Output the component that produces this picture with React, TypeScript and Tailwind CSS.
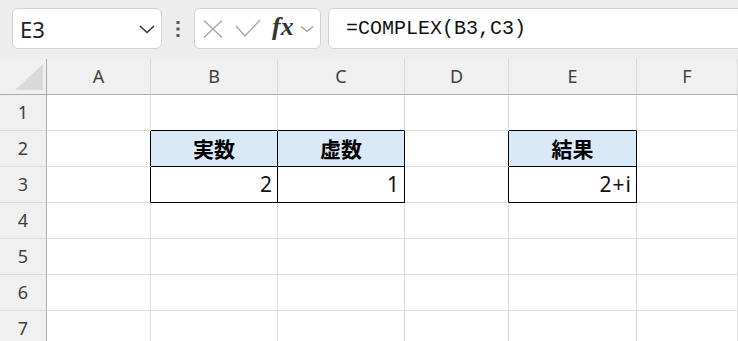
import React from "react";

const COLS = ["A", "B", "C", "D", "E", "F"];
const ROWS = [1, 2, 3, 4, 5, 6, 7];

const DATA: Record<string, { text: string; head?: boolean }> = {
  B2: { text: "実数", head: true },
  C2: { text: "虚数", head: true },
  E2: { text: "結果", head: true },
  B3: { text: "2" },
  C3: { text: "1" },
  E3: { text: "2+i" },
};

function blackRight(col: string, row: number) {
  return (row === 2 || row === 3) && ["A", "B", "C", "D", "E"].includes(col);
}

function blackBottom(col: string, row: number) {
  return ["B", "C", "E"].includes(col) && row >= 1 && row <= 3;
}

function Cell({ col, row }: { col: string; row: number }) {
  const d = DATA[col + row];
  const r = blackRight(col, row) ? "border-r-black" : "border-r-[#dedede]";
  const b = blackBottom(col, row) ? "border-b-black" : "border-b-[#dedede]";
  const fill = d?.head ? "bg-[#dae9f8]" : "bg-white";
  return (
    <div
      className={`h-[36px] border-r border-b ${r} ${b} ${fill} flex items-center ${
        d?.head ? "justify-center" : "justify-end pr-[4px]"
      }`}
    >
      {d && (
        <span
          className={
            d.head
              ? "text-[21px] font-bold text-black font-['Noto_Sans_CJK_JP',sans-serif] leading-none"
              : "text-[21px] text-[#111] tracking-[1px] font-['Noto_Sans','Noto_Sans_CJK_JP',sans-serif] leading-none"
          }
        >
          {d.text}
        </span>
      )}
    </div>
  );
}

function Toolbar() {
  return (
    <div className="h-[59px] bg-[#ededed] flex items-start pt-[8px] pl-[12px] overflow-hidden">
      <div className="w-[150px] h-[41px] bg-white border border-[#d2d2d2] rounded-[6px] flex items-center pl-[7px] pr-[6px]">
        <span className="flex-1 text-[22px] text-[#222] font-['Noto_Sans',sans-serif] leading-none">E3</span>
        <svg width="16" height="10" viewBox="0 0 16 10">
          <path d="M1 2 L8 8.5 L15 2" fill="none" stroke="#333" strokeWidth="1.5" />
        </svg>
      </div>
      <div className="w-[32px] h-[41px] flex items-center justify-center">
        <svg width="4" height="18" viewBox="0 0 4 18">
          <rect x="0.5" y="1" width="3" height="3" fill="#555" />
          <rect x="0.5" y="7.5" width="3" height="3" fill="#555" />
          <rect x="0.5" y="14" width="3" height="3" fill="#555" />
        </svg>
      </div>
      <div className="w-[127px] h-[41px] bg-white border border-[#d2d2d2] rounded-[6px] flex items-center pl-[8px]">
        <svg width="20" height="20" viewBox="0 0 20 20">
          <path d="M1 1.5 L19 18.5 M19 1.5 L1 18.5" stroke="#a9a9a9" strokeWidth="1.4" fill="none" />
        </svg>
        <svg width="26" height="20" viewBox="0 0 26 20" className="ml-[12px]">
          <path d="M1 7 L10 17 L25 1" stroke="#a9a9a9" strokeWidth="1.4" fill="none" />
        </svg>
        <span className="ml-[11px] text-[26px] italic font-bold text-[#333] font-['Liberation_Serif',serif] leading-none -mt-[3px]">
          fx
        </span>
        <svg width="14" height="8" viewBox="0 0 14 8" className="ml-[6px]">
          <path d="M1 1.5 L7 6.5 L13 1.5" stroke="#9a9a9a" strokeWidth="1.3" fill="none" />
        </svg>
      </div>
      <div className="flex-1 ml-[7px] mr-[-12px] h-[41px] bg-white border border-[#d2d2d2] rounded-[6px] flex items-center pl-[17px]">
        <span className="text-[20px] text-[#111] font-['Liberation_Mono',monospace] leading-none">
          =COMPLEX(B3,C3)
        </span>
      </div>
    </div>
  );
}

export default function App() {
  return (
    <div className="w-[738px] h-[341px] overflow-hidden bg-white">
      <Toolbar />
      <div className="grid grid-cols-[47px_104px_127px_127px_104px_128px_1fr]">
        <div className="h-[36px] bg-[#f0f0f0] border-r border-b border-r-[#ababab] border-b-[#ababab] flex items-end justify-end pr-[3px] pb-[4px]">
          <svg width="28" height="26" viewBox="0 0 28 26">
            <path d="M28 0 L28 26 L0 26 Z" fill="#d9d9d9" />
          </svg>
        </div>
        {COLS.map((c) => (
          <div
            key={c}
            className="h-[36px] bg-[#f0f0f0] border-r border-b border-r-[#dadada] border-b-[#ababab] flex items-center justify-center text-[18px] text-[#404040] font-['Noto_Sans',sans-serif]"
          >
            {c}
          </div>
        ))}
        {ROWS.map((r) => (
          <React.Fragment key={r}>
            <div className="h-[36px] bg-[#f0f0f0] border-r border-b border-r-[#ababab] border-b-[#dadada] flex items-center justify-center text-[18px] text-[#404040] font-['Noto_Sans',sans-serif]">
              {r}
            </div>
            {COLS.map((c) => (
              <Cell key={c} col={c} row={r} />
            ))}
          </React.Fragment>
        ))}
      </div>
    </div>
  );
}
